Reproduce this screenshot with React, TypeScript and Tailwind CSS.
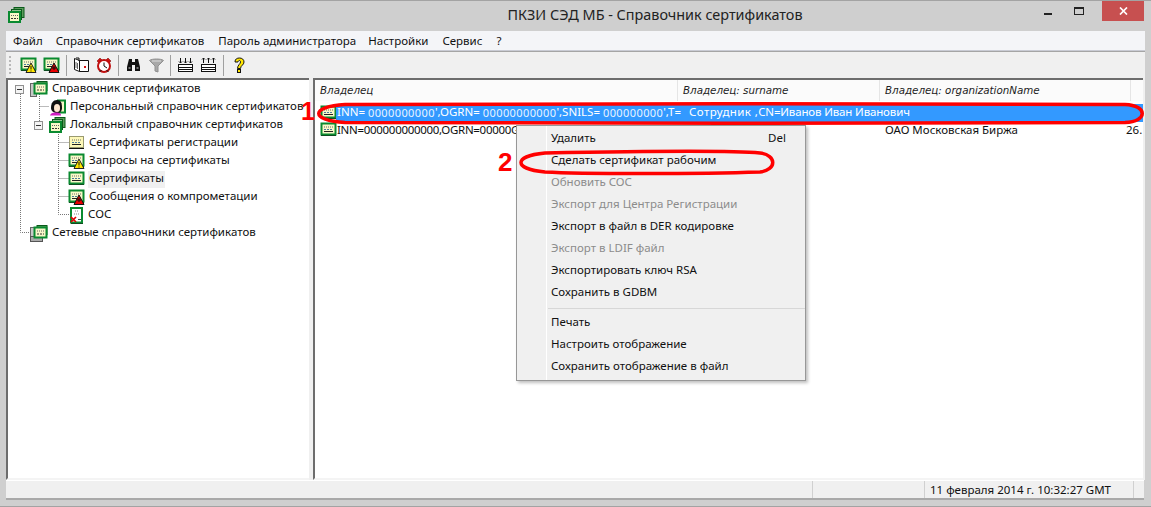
import React from "react";

const font = { fontFamily: '"Noto Sans", "Open Sans", sans-serif' };

function Cert({ kind = "plain" }: { kind?: string }) {
  const pale = kind === "reg";
  return (
    <svg width="17" height="16" viewBox="0 0 17 16" className="shrink-0">
      <rect x="1" y="2" width="15" height="12" fill="#111" />
      <rect x="1.500" y="1.500" width="14" height="11" fill={pale ? "#fdf8b8" : "#f8f8c8"} stroke={pale ? "#9a9a70" : "#0a8a30"} strokeWidth={pale ? 1 : 2} />
      <path d="M4 5h3M8 5h1M10 5h3" stroke="#6a6a6a" strokeDasharray="1 1" />
      <path d="M4 7.500h9" stroke="#4a7a9a" strokeDasharray="2 1" />
      <path d="M4 9.500h9" stroke="#222" />
      {kind === "warn" && <path d="M11 6l5 9.500H6z" fill="#ffe600" stroke="#222" />}
      {kind === "warn" && <path d="M11 9v3.500M11 13.500v1" stroke="#111" />}
      {kind === "bad" && <path d="M11 6l5 9.500H6z" fill="#e80000" stroke="#111" />}
      {kind === "bad" && <path d="M11 9v4M9 11h4" stroke="#111" />}
    </svg>
  );
}

function CrlIcon() {
  return (
    <svg width="15" height="17" viewBox="0 0 15 17" className="shrink-0">
      <rect x="2" y="2" width="12" height="15" fill="#111" />
      <rect x="2" y="1" width="11" height="14.500" fill="#fff" stroke="#0a8a30" strokeWidth="2" />
      <path d="M6 4h3M5 7h5" stroke="#888" strokeDasharray="1 1" />
      <path d="M2 10l5 5M7 10l-5 5" stroke="#e00000" strokeWidth="1.700" />
      <path d="M9 12.500h3" stroke="#444" />
    </svg>
  );
}

function Stack({ server = false }: { server?: boolean }) {
  return (
    <svg width="18" height="17" viewBox="0 0 18 17" className="shrink-0">
      <rect x="0.500" y="2.500" width="6" height="13" fill="#c8c8c8" stroke="#666" />
      {server && <rect x="0.500" y="11.500" width="12" height="5" fill="#aaa" stroke="#555" />}
      <rect x="7" y="0.500" width="10" height="9" fill="#5b9b5b" stroke="#0a5a1a" />
      <rect x="4.500" y="2.500" width="12" height="10" fill="#f8f8c8" stroke="#0a8a30" strokeWidth="2" />
      <path d="M7 6h7" stroke="#666" strokeDasharray="1 1" />
      <path d="M7 9h7" stroke="#333" strokeDasharray="2 1" />
    </svg>
  );
}

function Local() {
  return (
    <svg width="17" height="16" viewBox="0 0 17 16" className="shrink-0">
      <rect x="6" y="0.500" width="10" height="10" fill="#5b9b5b" stroke="#0a5a1a" />
      <rect x="3.500" y="2.500" width="10" height="10" fill="#8cbf8c" stroke="#0a5a1a" />
      <rect x="1" y="5" width="11" height="10" fill="#f8f8c8" stroke="#0a8a30" strokeWidth="2" />
      <path d="M3 8.500h7" stroke="#666" strokeDasharray="1 1" />
      <path d="M3 11.500h7" stroke="#333" strokeDasharray="2 1" />
    </svg>
  );
}

function Person() {
  return (
    <svg width="17" height="17" viewBox="0 0 17 17" className="shrink-0">
      <rect x="9" y="1.500" width="7" height="12" fill="#f8f8c8" stroke="#0a8a30" strokeWidth="2" />
      <path d="M2 9c0-5 2-8 6-8s5 3 5 8c0 3-2 5-5 5s-6-2-6-5z" fill="#111" />
      <path d="M5 9c0-3 1-4 3-4s3 1 3 4-1 4-3 4-3-1-3-4z" fill="#ffe7d0" />
      <path d="M1 16.500c1-3 4-3 6-3s5 0 5 3z" fill="#d020c0" />
    </svg>
  );
}

function Book() {
  return (
    <svg width="17" height="16" viewBox="0 0 17 16" className="shrink-0">
      <path d="M1.500 1.500l5 2v11l-5-2z" fill="#fff" stroke="#111" />
      <path d="M6.500 3.500h9v11h-9z" fill="#fff" stroke="#111" />
      <path d="M3 1h3v3" fill="none" stroke="#111" />
      <rect x="11" y="9" width="2" height="2" fill="#d01010" />
      <path d="M3 5v6M4.500 6v6" stroke="#666" />
    </svg>
  );
}

function Clock() {
  return (
    <svg width="16" height="16" viewBox="0 0 16 16" className="shrink-0">
      <path d="M1 4l3-3 2 2-3 3zM15 4l-3-3-2 2 3 3z" fill="#d01010" stroke="#600" strokeWidth="0.500" />
      <circle cx="8" cy="9" r="6" fill="#fff" stroke="#c01010" strokeWidth="2" />
      <path d="M8 5.500V9l3 2" fill="none" stroke="#111" />
      <path d="M3.500 15l2-2M12.500 15l-2-2" stroke="#111" />
    </svg>
  );
}

function Binoc() {
  return (
    <svg width="15" height="14" viewBox="0 0 15 14" className="shrink-0">
      <path d="M3 1h3v3h3V1h3l2 8v4H9V7H6v6H1V9z" fill="#111" />
      <rect x="2.500" y="9" width="2" height="2" fill="#777" />
      <rect x="10.500" y="9" width="2" height="2" fill="#777" />
    </svg>
  );
}

function Funnel() {
  return (
    <svg width="15" height="15" viewBox="0 0 15 15" className="shrink-0">
      <path d="M0.500 2.500c2-2 12-2 14 0L9 8v6l-3-1V8z" fill="#a8a8a8" stroke="#909090" />
      <path d="M3 3h9" stroke="#dcdcdc" />
    </svg>
  );
}

function Tray({ up = false }: { up?: boolean }) {
  const arrows = up
    ? "M3.500 6V1M2 2.500l1.500-1.500L5 2.500M8.500 6V1M7 2.500l1.500-1.500L10 2.500M13.500 6V1M12 2.500l1.500-1.500L15 2.500"
    : "M3.500 1v5M2 4.500L3.500 6 5 4.500M8.500 1v5M7 4.500L8.500 6 10 4.500M13.500 1v5M12 4.500L13.500 6 15 4.500";
  return (
    <svg width="17" height="16" viewBox="0 0 17 16" className="shrink-0">
      <path d={arrows} fill="none" stroke="#111" />
      <rect x="1.500" y="7.500" width="14" height="7" fill="#fff" stroke="#111" />
      <path d="M1 10.500h15M1 12.500h15" stroke="#111" />
    </svg>
  );
}

function Help() {
  return (
    <svg width="13" height="17" viewBox="0 0 13 17" className="shrink-0">
      <path d="M2 5c0-3 2-4 4.500-4S11 2.500 11 5c0 3-3.500 3.500-3.500 6.500h-3C4.500 8 7.500 7 7.500 5c0-1-.5-1.500-1-1.500S5 4 5 5z" fill="#ffe600" stroke="#111" />
      <rect x="4.500" y="12.500" width="3" height="3" fill="#ffe600" stroke="#111" />
    </svg>
  );
}

function Expander() {
  return (
    <span className="w-[9px] h-[9px] border border-[#919191] bg-[#f4f4f4] flex items-center justify-center shrink-0">
      <span className="w-[5px] h-px bg-[#333]" />
    </span>
  );
}

const tree = [
  { pad: "pl-[30px]", icon: <Stack />, label: "Справочник сертификатов" },
  { pad: "pl-[49px]", icon: <Person />, label: "Персональный справочник сертификатов" },
  { pad: "pl-[49px]", icon: <Local />, label: "Локальный справочник сертификатов" },
  { pad: "pl-[68px]", icon: <Cert kind="reg" />, label: "Сертификаты регистрации" },
  { pad: "pl-[68px]", icon: <Cert kind="warn" />, label: "Запросы на сертификаты" },
  { pad: "pl-[68px]", icon: <Cert />, label: "Сертификаты", sel: true },
  { pad: "pl-[68px]", icon: <Cert kind="bad" />, label: "Сообщения о компрометации" },
  { pad: "pl-[69px]", icon: <CrlIcon />, label: "СОС" },
  { pad: "pl-[30px]", icon: <Stack server />, label: "Сетевые справочники сертификатов" },
];

const menuItems: (null | { t: string; off?: boolean; key?: string })[] = [
  { t: "Удалить", key: "Del" },
  { t: "Сделать сертификат рабочим" },
  { t: "Обновить СОС", off: true },
  { t: "Экспорт для Центра Регистрации", off: true },
  { t: "Экспорт в файл в DER кодировке" },
  { t: "Экспорт в LDIF файл", off: true },
  { t: "Экспортировать ключ RSA" },
  { t: "Сохранить в GDBM" },
  null,
  { t: "Печать" },
  { t: "Настроить отображение" },
  { t: "Сохранить отображение в файл" },
];

function Sep() {
  return <span className="w-px h-[21px] bg-[#a0a0a0] shrink-0" />;
}

export default function App() {
  return (
    <div style={font} className="relative w-[1151px] h-[507px] overflow-hidden bg-[#cfcfcf] text-[11.500px] leading-none text-[#111] border-t border-[#a3a3a3] flex flex-col">
      {/* Title bar */}
      <div className="relative h-[30px] shrink-0 flex items-center justify-center">
        <span className="absolute left-[8px] top-[6px]"><Local /></span>
        <span className="text-[14.400px] text-[#222] pl-[159px] pb-[2px]">ПКЗИ СЭД МБ - Справочник сертификатов</span>
        <div className="absolute right-[7px] top-0 flex items-start">
          <span className="w-[8px] h-[2px] bg-[#222] mt-[12px] mr-[22px]" />
          <span className="w-[10px] h-[8px] border border-[#222] border-t-2 mt-[6px] mr-[18px]" />
          <span className="w-[42px] h-[20px] bg-[#c75050] text-white flex items-center justify-center">
            <svg width="9" height="8" viewBox="0 0 9 8"><path d="M1 .5l7 7M8 .5l-7 7" stroke="#fff" strokeWidth="1.700" /></svg>
          </span>
        </div>
      </div>

      <div className="mx-[6px] flex-1 flex flex-col min-h-0">
        {/* Menu */}
        <div className="h-[20px] shrink-0 bg-[#f4f5f8] flex items-center border-b border-[#c9cbd4]">
          <span className="ml-[7px]">Файл</span>
          <span className="ml-[13px]">Справочник сертификатов</span>
          <span className="ml-[14px]">Пароль администратора</span>
          <span className="ml-[12px]">Настройки</span>
          <span className="ml-[14px]">Сервис</span>
          <span className="ml-[14px]">?</span>
        </div>
        {/* Toolbar */}
        <div className="h-[27px] shrink-0 bg-[#f0f0f0] border-t border-[#a5a5a5] flex items-center pl-[2px]">
          <span className="w-[5px] h-[21px] mr-[7px] shrink-0 [background-image:radial-gradient(#b8b8b8_1px,transparent_1px)] [background-size:4px_4px]" />
          <Cert kind="warn" />
          <span className="w-[6px]" />
          <Cert kind="bad" />
          <span className="w-[6px]" />
          <Sep />
          <span className="w-[6px]" />
          <Book />
          <span className="w-[6px]" />
          <Clock />
          <span className="w-[6px]" />
          <Sep />
          <span className="w-[7px]" />
          <Binoc />
          <span className="w-[8px]" />
          <Funnel />
          <span className="w-[6px]" />
          <Sep />
          <span className="w-[6px]" />
          <Tray />
          <span className="w-[6px]" />
          <Tray up />
          <span className="w-[6px]" />
          <Sep />
          <span className="w-[9px]" />
          <Help />
        </div>

        {/* Panels */}
        <div className="flex-1 flex min-h-0 bg-[#f0f0f0]">
          <div className="relative w-[303px] shrink-0 bg-white border-l-2 border-t-2 border-[#6d6d6d] border-b-2 border-b-[#f4f4f4] overflow-hidden">
            <svg className="absolute left-0 top-0" width="80" height="170" fill="none" stroke="#777" strokeDasharray="1 1">
              <path d="M12.500 14V152.500H22M12.500 9V6" />
              <path d="M31.500 14V45M31.500 26.500H41" />
              <path d="M50.500 50V134.500H61M50.500 62.500H61M50.500 80.500H61M50.500 98.500H61M50.500 116.500H61" />
              <path d="M32 44.500H27" />
            </svg>
            {tree.map((r, i) => (
              <div key={i} className={`relative h-[18px] flex items-center whitespace-nowrap ${r.pad} -ml-[8px]`}>
                {i === 0 && <span className="absolute left-[15px] top-[5px]"><Expander /></span>}
                {i === 2 && <span className="absolute left-[34px] top-[5px]"><Expander /></span>}
                {r.icon}
                <span className={`ml-[3px] px-[1px] h-[17px] pb-[2px] flex items-center ${r.sel ? "bg-[#f0f0f0]" : ""}`}>{r.label}</span>
              </div>
            ))}
          </div>
          <div className="w-[4px] shrink-0" />
          <div className="flex-1 min-w-0 bg-white border-l-2 border-t-2 border-[#6d6d6d] border-b-2 border-b-[#f4f4f4] overflow-hidden mr-[2px] flex flex-col">
            <div className="h-[21px] shrink-0 bg-[#fbfbfb] flex items-center text-[10.300px] italic text-[#222]" style={{ fontFamily: '"DejaVu Sans", sans-serif' }}>
              <span className="w-[363px] pl-[5px] h-full flex items-center border-r border-[#e5e5e5] shrink-0">Владелец</span>
              <span className="w-[202px] pl-[5px] h-full flex items-center border-r border-[#e5e5e5] shrink-0">Владелец: surname</span>
              <span className="w-[251px] pl-[5px] h-full flex items-center border-r border-[#e5e5e5] shrink-0">Владелец: organizationName</span>
            </div>
            <div className="h-[3px] shrink-0" />
            <div className="h-[18px] shrink-0 flex items-center pl-[5px] whitespace-nowrap">
              <Cert />
              <span className="flex-1 ml-[-1px] h-full bg-[#3399ff] text-white flex items-center pl-[1px] pb-[2px]">
                INN=<span className="text-[#e8f3ff] tracking-[0.4px] text-[11px] ml-[3px]">0000000000</span>',OGRN=<span className="text-[#e8f3ff] tracking-[0.4px] text-[11px] ml-[3px]">00000000000</span>',SNILS=<span className="text-[#e8f3ff] tracking-[0.4px] text-[11px] ml-[3px]">000000000</span>',T=<span className="ml-[8px] tracking-[0.4px]">Сотрудник ,</span><span className="tracking-[-0.15px]">CN=Иванов Иван Иванович</span>
              </span>
            </div>
            <div className="h-[18px] shrink-0 flex items-center pl-[5px] whitespace-nowrap pb-[2px]">
              <Cert />
              <span className="w-[548px] shrink-0 tracking-[-0.3px]">INN=000000000000,OGRN=00000G</span>
              <span className="w-[241px] shrink-0">ОАО Московская Биржа</span>
              <span>26.</span>
            </div>
          </div>
        </div>

        {/* Status bar */}
        <div className="h-[20px] shrink-0 bg-[#f0f0f0] border-t border-[#fff] border-b-2 border-b-[#a9a9a9] flex items-stretch justify-end mr-[1px]">
          <div className="w-[112px] border-l border-[#d0d0d0] shrink-0" />
          <div className="w-[209px] border-l border-[#d0d0d0] flex items-center pl-[5px] pt-[1px] whitespace-nowrap shrink-0">11 февраля 2014 г. 10:32:27 GMT</div>
          <div className="w-[11px] border-l border-[#d0d0d0] shrink-0" />
        </div>
      </div>
      <div className="h-[7px] shrink-0 border-b border-[#a3a3a3]" />

      {/* Context menu */}
      <div className="absolute left-[516px] top-[124px] w-[290px] h-[256px] bg-[#f0f0f0] border border-[#979797] py-[2px] shadow-[2px_2px_3px_rgba(0,0,0,0.25)] z-10">
        <span className="absolute left-[29px] top-0 bottom-0 w-px bg-[#e2e2e2] border-r border-white" />
        {menuItems.map((m, i) =>
          m === null ? (
            <div key={i} className="h-[8px] pl-[31px] flex items-center"><span className="h-px flex-1 bg-[#d7d7d7]" /></div>
          ) : (
            <div key={i} className={`relative h-[22px] flex items-center pl-[34px] pb-[2px] ${m.off ? "text-[#8c8c8c]" : ""}`}>
              {m.t}
              {m.key && <span className="absolute left-[251px]">{m.key}</span>}
            </div>
          )
        )}
      </div>

      {/* Red annotations */}
      <svg className="absolute left-0 top-0 z-20 pointer-events-none" width="1151" height="507" fill="none" stroke="#ff0000">
        <path strokeWidth="3.500" d="M345 103.500C500 102.500 1000 102.500 1125 103.500C1148 104.500 1148 120.500 1125 121.500C1000 122.500 500 122.500 345 121.500C310 119.500 310 105.500 345 103.500Z" />
        <path strokeWidth="3.500" d="M545 152C650 150 740 150 760 152C777 154 777 169 760 171C700 173 580 173 545 171C513 168 513 155 545 152Z" />
      </svg>
      <span className="absolute left-[301px] top-[98px] z-20 text-[#ff0000] font-bold text-[25px] leading-none" style={{ fontFamily: '"Liberation Sans", sans-serif' }}>1</span>
      <span className="absolute left-[498px] top-[148px] z-20 text-[#ff0000] font-bold text-[26px] leading-none" style={{ fontFamily: '"Liberation Sans", sans-serif' }}>2</span>
    </div>
  );
}
